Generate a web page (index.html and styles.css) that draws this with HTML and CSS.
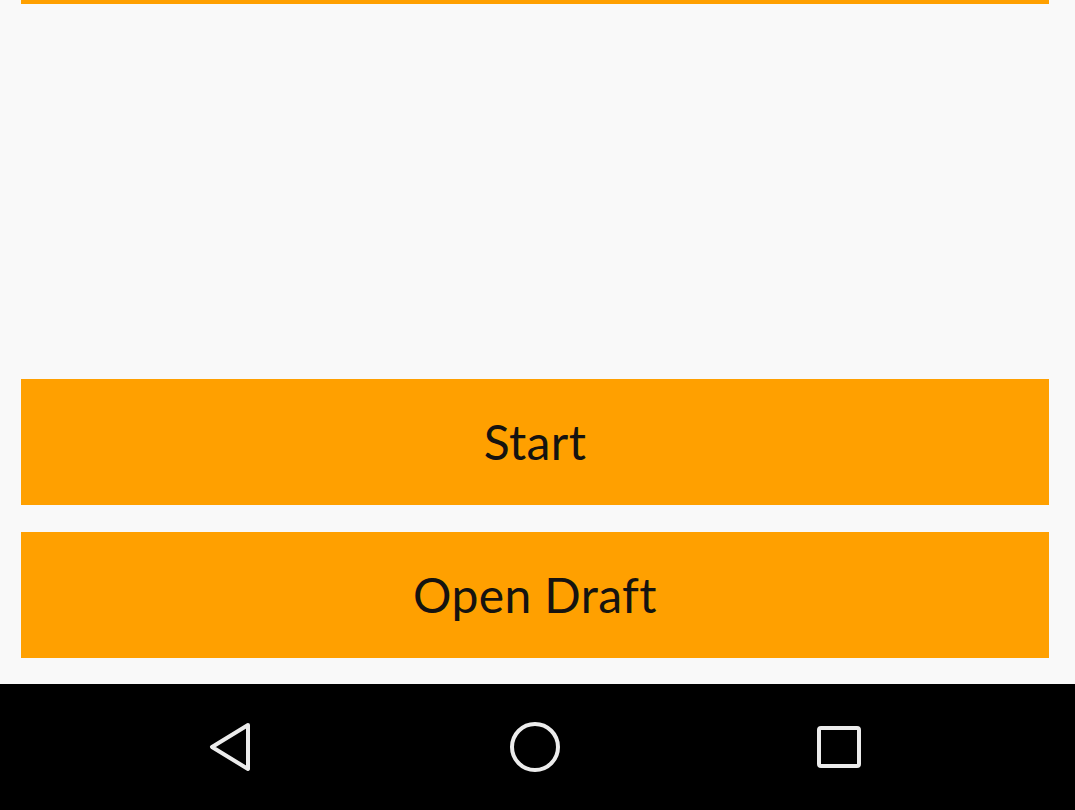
FILE: index.html
```html
<!DOCTYPE html>
<html>
<head>
<meta charset="utf-8">
<link rel="stylesheet" href="styles.css">
</head>
<body>
<div class="screen">
  <div class="top-bar"></div>
  <div class="spacer"></div>
  <div class="actions">
    <button class="btn">Start</button>
    <button class="btn">Open Draft</button>
  </div>
  <nav class="navbar">
    <svg class="nav-icon" width="46" height="52" viewBox="0 0 46 52">
      <path d="M41 4 L5 26 L41 48 Z" fill="none" stroke="#ececec" stroke-width="4" stroke-linejoin="round"/>
    </svg>
    <svg class="nav-icon" width="52" height="52" viewBox="0 0 52 52">
      <circle cx="26" cy="26" r="23" fill="none" stroke="#ececec" stroke-width="4"/>
    </svg>
    <svg class="nav-icon" width="46" height="44" viewBox="0 0 46 44">
      <rect x="3" y="3" width="40" height="38" rx="2" fill="none" stroke="#ececec" stroke-width="4"/>
    </svg>
  </nav>
</div>
</body>
</html>
```
FILE: styles.css
```css
html, body {
  margin: 0;
  padding: 0;
  background: #f9f9f9;
}
.screen {
  width: 1075px;
  height: 810px;
  display: flex;
  flex-direction: column;
  overflow: hidden;
}
.top-bar {
  height: 4px;
  margin: 0 26px 0 21px;
  background: #ffa000;
}
.spacer {
  flex: 1;
}
.actions {
  display: flex;
  flex-direction: column;
  gap: 27px;
  margin: 0 26px 26px 21px;
}
.btn {
  height: 126px;
  border: none;
  border-radius: 0;
  background: #ffa000;
  color: #151310;
  font-family: Lato, "Noto Sans", sans-serif;
  font-size: 48px;
  font-weight: 400;
  letter-spacing: 0.4px;
  padding: 0;
  padding-bottom: 2px;
}
.navbar {
  height: 126px;
  background: #000;
  display: flex;
  align-items: center;
  justify-content: space-between;
  padding: 0 213px 0 207px;
}
.nav-icon {
  display: block;
}
```
